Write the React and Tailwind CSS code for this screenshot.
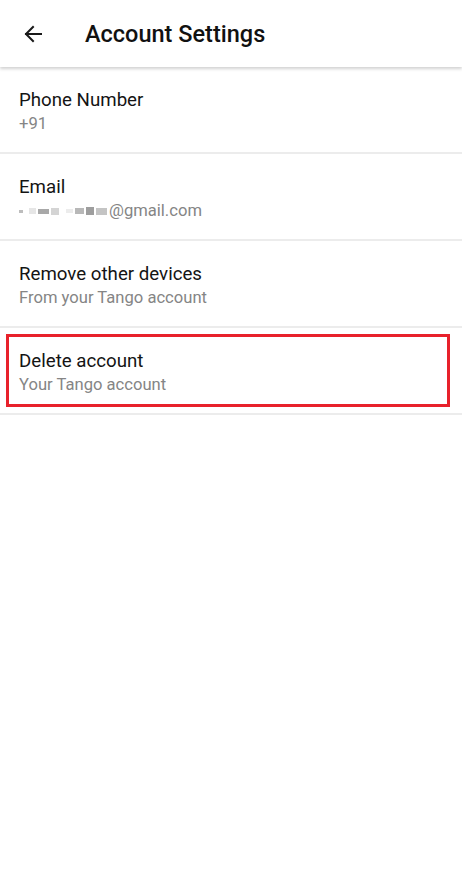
import React from 'react';

const rows = [
  { title: 'Phone Number', sub: '+91' },
  { title: 'Email', sub: 'email' },
  { title: 'Remove other devices', sub: 'From your Tango account' },
  { title: 'Delete account', sub: 'Your Tango account', marked: true },
];

// pixelated placeholder for the hidden part of the address
const Blur = () => (
  <span className="inline-flex items-center gap-[2px] mr-[2px] align-middle">
    <span className="w-[4px] h-[3px] bg-[#bdbdbd]" />
    <span className="w-[7px] h-[6px] bg-[#e6e6e6] ml-[4px]" />
    <span className="w-[11px] h-[5px] bg-[#a8a8a8]" />
    <span className="w-[8px] h-[7px] bg-[#d4d4d4]" />
    <span className="w-[7px] h-[4px] bg-[#ececec] ml-[5px]" />
    <span className="w-[9px] h-[6px] bg-[#b8b8b8]" />
    <span className="w-[8px] h-[8px] bg-[#9e9e9e]" />
    <span className="w-[11px] h-[7px] bg-[#c4c4c4]" />
  </span>
);

export default function App() {
  return (
    <div className="min-h-screen w-full bg-white font-['Roboto',sans-serif]">
      <header className="h-[67px] flex items-center bg-white shadow-[0_2px_3px_rgba(0,0,0,0.18)] relative z-10">
        <button className="w-[66px] h-full flex items-center justify-center pt-[1px]">
          <svg width="24" height="24" viewBox="0 0 24 24" fill="none" stroke="#1a1a1a" strokeWidth="2" strokeLinecap="square">
            <path d="M20 12H5M12 5l-7 7 7 7" />
          </svg>
        </button>
        <h1 className="ml-[19px] mt-[3px] text-[23.5px] font-medium text-[#111]">Account Settings</h1>
      </header>

      <ul>
        {rows.map((r) => (
          <li key={r.title} className="h-[87px] border-b-[2px] border-[#ececec] flex">
            <div
              className={
                r.marked
                  ? 'flex-1 ml-[6px] mr-[12px] my-[6px] border-[3px] border-[#e8212b] pl-[10px] pt-[4px] flex flex-col justify-center'
                  : 'flex-1 pl-[19px] pt-[4px] flex flex-col justify-center'
              }
            >
              <span className="text-[18.7px] leading-[24px] text-[#141414]">{r.title}</span>
              <span className="text-[16.6px] leading-[24px] text-[#858585]">
                {r.sub === 'email' ? (
                  <>
                    <Blur />@gmail.com
                  </>
                ) : (
                  r.sub
                )}
              </span>
            </div>
          </li>
        ))}
      </ul>
    </div>
  );
}
